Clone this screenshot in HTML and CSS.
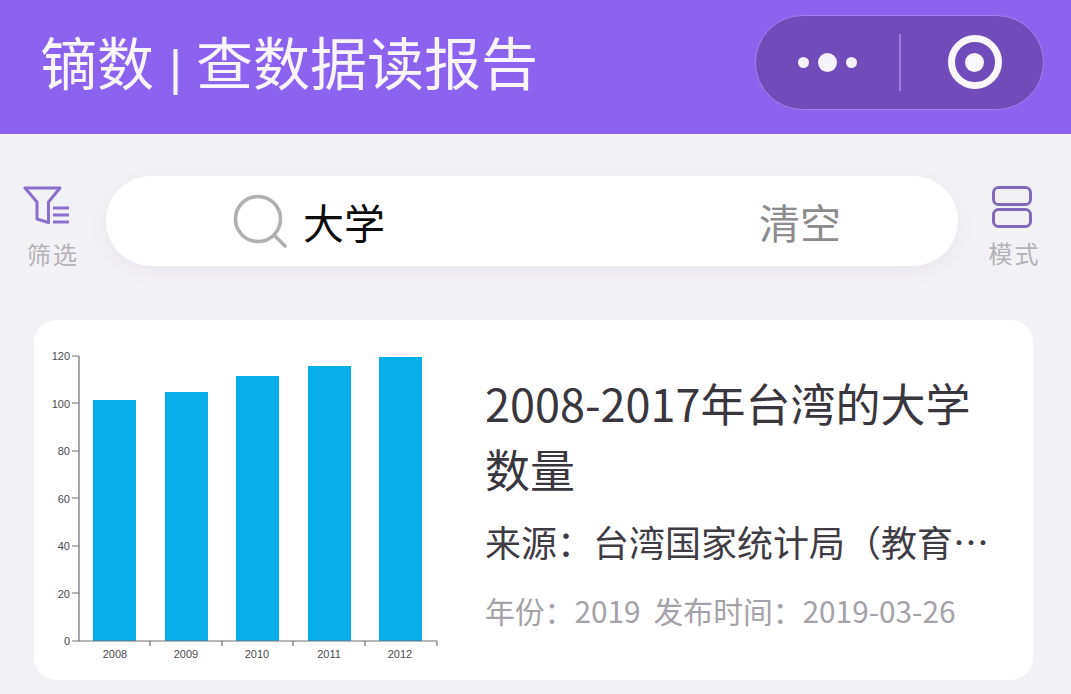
FILE: index.html
```html
<!DOCTYPE html>
<html lang="zh-CN">
<head>
<meta charset="utf-8">
<title>镝数 | 查数据读报告</title>
<link rel="stylesheet" href="styles.css">
</head>
<body>
<header class="topbar">
  <h1 class="app-title">镝数<span class="pipe">|</span>查数据读报告</h1>
  <div class="capsule">
    <div class="capsule-part capsule-more">
      <span class="dot"></span><span class="dot dot-big"></span><span class="dot"></span>
    </div>
    <span class="capsule-sep"></span>
    <div class="capsule-part capsule-close"><span class="ring"></span></div>
  </div>
</header>
<main class="page">
  <section class="toolbar">
    <div class="tool tool-filter">
      <svg class="tool-icon" width="48" height="40" viewBox="0 0 48 40" fill="none" stroke="#8a6fcf" stroke-width="3">
        <path d="M2 2H37L25.5 16V36.5L14 33V16Z" stroke-linejoin="round"/>
        <path d="M30 22H46M30 29H46M30 36H46"/>
      </svg>
      <span class="tool-label">筛选</span>
    </div>
    <div class="search">
      <svg class="search-icon" width="56" height="56" viewBox="0 0 56 56" fill="none" stroke="#b0afb2" stroke-width="3.6" stroke-linecap="round">
        <circle cx="25" cy="26" r="22.5"/>
        <path d="M42 43L52 53"/>
      </svg>
      <span class="search-text">大学</span>
      <span class="search-clear">清空</span>
    </div>
    <div class="tool tool-mode">
      <svg class="tool-icon" width="42" height="42" viewBox="0 0 42 42" fill="none" stroke="#8168b8" stroke-width="3">
        <rect x="2.5" y="1.5" width="37" height="17" rx="5"/>
        <rect x="2.5" y="23.5" width="37" height="17" rx="5"/>
      </svg>
      <span class="tool-label">模式</span>
    </div>
  </section>
  <article class="card">
    <svg class="chart" width="420" height="320" viewBox="0 0 420 320">
      <g class="bars" fill="#07aeea">
        <rect x="59" y="79" width="43" height="241"/>
        <rect x="131" y="71" width="43" height="249"/>
        <rect x="202" y="55" width="43" height="265"/>
        <rect x="274" y="45" width="43" height="275"/>
        <rect x="345" y="36" width="43" height="284"/>
      </g>
      <g fill="none" stroke="#6f6d72" stroke-width="1.2">
        <path d="M45 35V320H403"/>
        <path d="M38 35H45M38 82H45M38 130H45M38 177H45M38 225H45M38 272H45M38 320H45"/>
        <path d="M116 320V325M188 320V325M259 320V325M331 320V325M403 320V325"/>
      </g>
      <g class="y-labels">
        <text x="36" y="39">120</text>
        <text x="36" y="87">100</text>
        <text x="36" y="134">80</text>
        <text x="36" y="182">60</text>
        <text x="36" y="229">40</text>
        <text x="36" y="277">20</text>
        <text x="36" y="324">0</text>
      </g>
      <g class="x-labels">
        <text x="81" y="337">2008</text>
        <text x="152" y="337">2009</text>
        <text x="223" y="337">2010</text>
        <text x="295" y="337">2011</text>
        <text x="366" y="337">2012</text>
      </g>
    </svg>
    <div class="card-body">
      <h2 class="card-title">2008-2017年台湾的大学数量</h2>
      <p class="card-source">来源：台湾国家统计局（教育…</p>
      <p class="card-meta"><span>年份：2019</span><span>发布时间：2019-03-26</span></p>
    </div>
  </article>
</main>
</body>
</html>
```
FILE: styles.css
```css
* { box-sizing: border-box; }
html, body { margin: 0; height: 100%; }
body {
  width: 1071px;
  height: 694px;
  overflow: hidden;
  background: #f2f1f5;
  font-family: "Noto Sans CJK SC", "Noto Sans", sans-serif;
}
.topbar {
  height: 134px;
  background: #8c63ee;
  display: flex;
  align-items: center;
  justify-content: space-between;
  padding: 0 27px 0 40px;
}
.app-title {
  margin: 0 0 9px;
  font-size: 57px;
  font-weight: 400;
  line-height: 1;
  color: #f8f5fe;
}
.pipe {
  font-family: "Liberation Sans", sans-serif;
  font-size: 50px;
  margin: 0 14px 0 15px;
}
.capsule {
  width: 289px;
  height: 95px;
  margin-bottom: 10px;
  border-radius: 48px;
  background: #6f4cb9;
  border: 1.5px solid #a283ee;
  display: flex;
  align-items: center;
}
.capsule-part { display: flex; align-items: center; justify-content: center; }
.capsule-more { width: 143px; gap: 9px; }
.capsule-close { flex: 1; padding-left: 6px; }
.dot { width: 11px; height: 11px; border-radius: 50%; background: #f7f3fd; }
.dot-big { width: 19px; height: 19px; }
.capsule-sep { width: 1.5px; height: 57px; background: #9a7fd8; }
.ring {
  width: 54px;
  height: 54px;
  border-radius: 50%;
  border: 7px solid #f9f6fd;
  display: flex;
  align-items: center;
  justify-content: center;
}
.ring::before {
  content: "";
  width: 19px;
  height: 19px;
  border-radius: 50%;
  background: #f9f6fd;
}
.toolbar {
  display: flex;
  align-items: flex-start;
  padding: 42px 0 0 0;
  height: 186px;
}
.tool {
  display: flex;
  flex-direction: column;
  align-items: center;
}
.tool-filter { width: 106px; padding: 10px 0 0 0; }
.tool-filter .tool-icon { margin-right: 12px; }
.tool-mode { width: 113px; padding: 10px 0 0 0; }
.tool-mode .tool-icon { margin-right: 6px; }
.tool-icon { display: block; }
.tool-label {
  margin-top: 13px;
  font-size: 24px;
  line-height: 30px;
  letter-spacing: 2px;
  color: #b3b2b6;
}
.tool-mode .tool-label { margin-top: 10px; }
.search {
  width: 852px;
  height: 90px;
  border-radius: 45px;
  background: #fff;
  box-shadow: 0 6px 18px rgba(90, 70, 120, 0.06);
  display: flex;
  align-items: center;
  padding-left: 127px;
}
.search-icon { display: block; margin-right: 15px; }
.search-text { font-size: 41px; color: #0c0c0c; margin-left: -1px; }
.search-clear { margin-left: auto; margin-right: 117px; font-size: 41px; color: #8c8b8d; }
.card {
  width: 999px;
  height: 360px;
  margin-left: 34px;
  border-radius: 22px;
  background: #fff;
  display: flex;
  padding: 0;
}
.chart {
  flex: none;
  margin-top: 1px;
  overflow: visible;
}
.y-labels text, .x-labels text {
  font-family: "Liberation Sans", sans-serif;
  font-size: 11px;
  fill: #4a494e;
}
.y-labels text { text-anchor: end; }
.x-labels text { text-anchor: middle; }
.card-body {
  flex: 1;
  padding: 50px 20px 0 31px;
}
.card-title {
  margin: 0;
  font-size: 45px;
  font-weight: 400;
  line-height: 66px;
  color: #39373d;
}
.card-source {
  margin: 12px 0 0;
  font-size: 36px;
  line-height: 54px;
  color: #3f3d43;
  white-space: nowrap;
}
.card-meta {
  margin: 20px 0 0;
  font-size: 29.8px;
  line-height: 44px;
  color: #a4a2a8;
  display: flex;
  gap: 13px;
  white-space: nowrap;
}
```
